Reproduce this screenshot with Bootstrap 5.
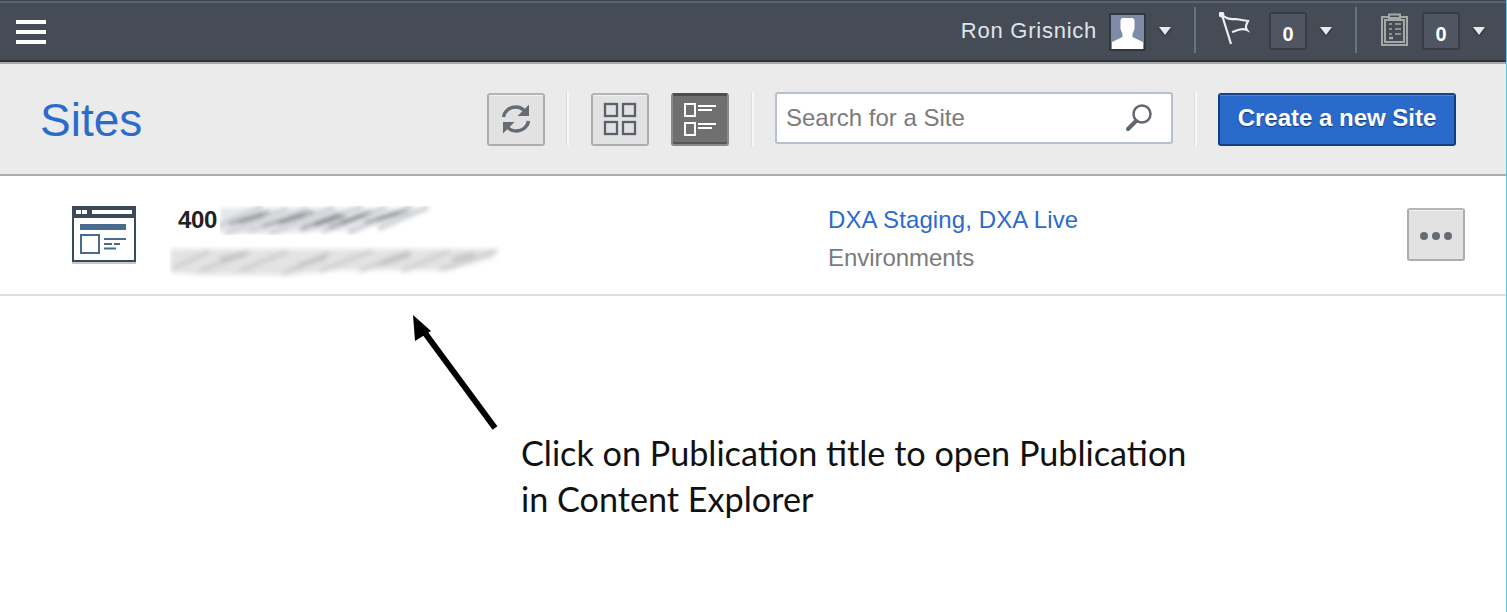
<!DOCTYPE html>
<html lang="en">
<head>
<meta charset="utf-8">
<title>Sites</title>
<link href="https://cdn.jsdelivr.net/npm/bootstrap@5.3.0/dist/css/bootstrap.min.css" rel="stylesheet">
<style>
html,body{height:612px;overflow:hidden;background:#fff}
body{font-family:"Liberation Sans",Arial,sans-serif;border-right:1px solid #5cc8ee}
.topbar{height:64px;background:linear-gradient(#3f4650 0 1px,#5a6571 1px 3px,#464c55 3px 60px,#2f343b 60px 62px,#a9a9a9 62px);padding:0 21px 0 16px}
.burger{width:30px;height:24px;background:linear-gradient(#fff 4px,transparent 4px 10px,#fff 10px 14px,transparent 14px 20px,#fff 20px);margin-top:0}
.uname{color:#dfe4ea;font-size:22px;letter-spacing:.75px;margin-right:12px;margin-top:-4px}
.avatar{width:37px;height:38px;background:#7f8ba6;border:2px solid #33383f;overflow:hidden;margin-right:13px}
.avatar svg{display:block}
.carat{width:0;height:0;border:6.5px solid transparent;border-top:8px solid #e8eaec;border-bottom:0;filter:drop-shadow(0 1px 1px #22262b);margin-top:-3px}
.vsep{width:2px;height:46px;background:#69727e;margin:-4px 23px 0}
.count{width:38px;height:38px;background:#4f5661;border:2px solid #383d45;border-radius:3px;color:#fff;font-size:20px;font-weight:700;margin-right:13px;margin-top:-2px;line-height:1;padding-top:10px}
.hicon{margin-top:-6px}
.gap-flag{margin-right:18px}
.gap-clip{margin-right:13px}
.toolbar{height:112px;background:#ebebeb;border-bottom:2px solid #adadad;padding:0 50px 0 40px}
.pagetitle{font-size:46px;color:#2a6bcc;line-height:1;margin:2px 0 0;font-weight:400}
.tbtn{width:58px;height:53px;background:#e2e2e2;border:2px solid #adadad;border-top-color:#b5b5b5;border-radius:3px;box-shadow:inset 0 1px 0 #f3f3f3;padding:0;flex-shrink:0}
.tbtn.is-on{background:#707070;border-color:#8a8a8a;border-top-color:#4d4d4d;box-shadow:inset 0 1px 0 #4d4d4d,inset 0 -2px 0 #565656;margin-left:22px}
.tsep{width:3px;height:54px;background:#f8f8f8;border-left:1px solid #dcdcdc;margin:0 21px;flex-shrink:0}
.tsep-first{margin-right:22px}
.tsep-wide{margin-left:22px}
.searchbox{width:398px;height:52px;background:#fff;border:2px solid #b6c0cf;border-radius:3px;padding:0 17px 0 9px;margin-top:-2px}
.searchbox input{border:0;outline:0;background:transparent;font-size:24px;font-family:inherit;width:100%;padding:0;color:#555}
.searchbox input::placeholder{color:#7b7b7b;opacity:1}
.createbtn{width:238px;height:53px;background:#2a6acb;border:2px solid #153f85;border-top-color:#16438c;border-radius:3px;color:#fff;font-size:24px;font-weight:700;line-height:1;padding:0 0 2px;text-shadow:0 1px 1px #123a7c;box-shadow:inset 0 1px 0 #4d86dc}
.createbtn:hover{background:#2a6acb;color:#fff}
.siterow{height:120px;border-bottom:2px solid #e0e0e0;background:#fff;padding:30px 41px 0 72px}
.siteicon{flex-shrink:0}
.titlecol{width:658px;margin-left:34px;flex-shrink:0}
.titleline{height:30px;padding-left:8px}
.siteid{font-size:24px;font-weight:700;color:#222;line-height:28px;letter-spacing:-.3px;margin-right:3px}
.smear{display:block;flex-shrink:0}
.smear-b{margin-top:10px}
.envs{flex-grow:1}
.envlink{font-size:24px;color:#2a6bcc;line-height:28px;letter-spacing:.1px;text-decoration:none;display:block}
.envlabel{font-size:24px;color:#7b7b7b;line-height:28px;margin-top:10px;letter-spacing:-.05px}
.morebtn{margin-top:2px}
.dot3{display:inline-block;width:8px;height:8px;background:#666b73;border-radius:50%;margin:0 2px}
.canvas{height:316px}
.arrow{position:absolute;left:400px;top:10px}
.note{font-family:"Lato",sans-serif;font-size:34.200px;line-height:46px;color:#111;margin:0;padding:134px 0 0 521px;white-space:nowrap}
</style>
</head>
<body>
<header class="topbar d-flex align-items-center">
  <div class="burger"></div>
  <div class="d-flex align-items-center ms-auto">
    <span class="uname">Ron Grisnich</span>
    <span class="avatar"><svg width="33" height="34" viewBox="0 0 33 34"><path fill="#fff" d="M11 3h11l1.500 2v9l-2 5v3l10.500 5v7H1v-7l10.500-5v-3l-2-5V5z"/></svg></span>
    <span class="carat"></span>
    <span class="vsep"></span>
    <svg width="32" height="34" viewBox="0 0 32 34" fill="none" stroke="#eceef0" stroke-width="2.200" class="hicon gap-flag"><circle cx="2.500" cy="2.500" r="1.800" fill="#eceef0"/><path d="M3 3c6 5 9 4 14 4l12 2c-2 4-3 6-1 9-6-3-10 1-15 2M3 3l9 29"/></svg>
    <span class="count text-center">0</span>
    <span class="carat"></span>
    <span class="vsep"></span>
    <svg width="29" height="33" viewBox="0 0 29 33" fill="none" stroke="#a5a9a5" stroke-width="2" class="hicon gap-clip"><path d="M9 4H2v28h25V4h-7M9 5V1.500h11V5zM5 7h19v22H5z"/><path stroke-width="1.700" d="M9 11h3M15 11h6M9 16h3M15 16h6M9 21h3M15 21h6"/><path stroke-width="2.500" d="M9 25h4"/></svg>
    <span class="count text-center">0</span>
    <span class="carat"></span>
  </div>
</header>

<section class="toolbar d-flex align-items-center">
  <h1 class="pagetitle">Sites</h1>
  <div class="d-flex align-items-center ms-auto">
    <button class="tbtn btn" type="button" aria-label="Refresh"><svg width="30" height="32" viewBox="0 0 30 32" fill="none" stroke="#666c76" stroke-width="3.500"><path d="M2.500 14C3.500 8 8.500 4 15 4c3.500 0 6.500 1.500 9 4.500"/><path d="M27.500 18C26.500 24 21.500 28 15 28c-3.500 0-6.500-1.500-9-4.500"/><path fill="#666c76" stroke="none" d="M28 1.500V13H16.500zM2 30.500V19h11.500z"/></svg></button>
    <span class="tsep tsep-first"></span>
    <button class="tbtn btn" type="button" aria-label="Grid view"><svg width="34" height="34" viewBox="0 0 34 34" fill="none" stroke="#5b616b" stroke-width="2.300"><rect x="2" y="2" width="12" height="12"/><rect x="20" y="2" width="12" height="12"/><rect x="2" y="20" width="12" height="12"/><rect x="20" y="20" width="12" height="12"/></svg></button>
    <button class="tbtn is-on btn" type="button" aria-label="List view"><svg width="34" height="34" viewBox="0 0 34 34" fill="none" stroke="#fff" stroke-width="2"><rect x="2" y="2" width="10" height="12"/><rect x="2" y="21" width="10" height="12"/><path d="M15 4h18M15 8h14M15 22h18M15 26h14"/></svg></button>
    <span class="tsep tsep-wide"></span>
    <label class="searchbox d-flex align-items-center mb-0">
      <input type="text" placeholder="Search for a Site">
      <svg width="30" height="30" viewBox="0 0 30 30" fill="none" stroke="#62666e" class="flex-shrink-0"><circle cx="18" cy="11" r="8.500" stroke-width="2.500"/><path d="M12 18l-8 8" stroke-width="4" stroke-linecap="round"/></svg>
    </label>
    <span class="tsep"></span>
    <button class="createbtn btn" type="button">Create a new Site</button>
  </div>
</section>

<section class="siterow d-flex align-items-start">
  <svg class="siteicon" width="64" height="58" viewBox="0 0 64 58">
    <rect x="0" y="56" width="64" height="2" fill="#c6c8cb"/>
    <rect x="1" y="1" width="62" height="54" fill="#fff" stroke="#3a4a5a" stroke-width="2"/>
    <rect x="0" y="0" width="64" height="12" fill="#3a4a5a"/>
    <rect x="4" y="4" width="5" height="4" fill="#fff"/><rect x="10" y="4" width="5" height="4" fill="#fff"/><rect x="20" y="4" width="40" height="4" fill="#fff"/>
    <rect x="8" y="18" width="46" height="6" fill="#4a6b90"/>
    <rect x="9" y="29" width="18" height="18" fill="none" stroke="#4a6b90" stroke-width="2"/>
    <path d="M32 33h22M32 38h8M42 38h6M32 42.500h12" stroke="#4a6b90" stroke-width="2"/>
  </svg>
  <div class="titlecol">
    <div class="titleline d-flex align-items-start">
      <span class="siteid">400</span>
      <svg class="smear" width="214" height="29" viewBox="0 0 214 29">
        <defs><filter id="bl1" x="-10%" y="-30%" width="120%" height="160%"><feGaussianBlur stdDeviation="2.200"/></filter></defs>
        <g filter="url(#bl1)" fill="none" stroke-linecap="round">
          <path d="M0 2H212L190 12 130 24 50 28H0z" fill="#e6e7e9"/>
          <path d="M-2 20L40 1M8 27L66 3M30 25L86 3M52 27L112 2M82 24L140 1M104 25L164 2M130 26L190 1M160 22L206 2" stroke="#cfd1d5" stroke-width="5"/>
          <path d="M10 18L48 6M44 20L92 6M82 22L118 8M110 21L150 6M146 16L186 5" stroke="#a3a7ad" stroke-width="3.500"/>
          <path d="M20 16L42 9M60 17L84 9M96 19L124 10M122 17L144 9M158 13L178 7" stroke="#6a717b" stroke-width="2.500"/>
        </g>
      </svg>
    </div>
    <svg class="smear smear-b" width="330" height="32" viewBox="0 0 330 32">
      <defs><filter id="bl2" x="-10%" y="-30%" width="120%" height="160%"><feGaussianBlur stdDeviation="2.500"/></filter></defs>
      <g filter="url(#bl2)" fill="none">
        <path d="M0 3H330L322 12 280 24H170L120 29H30L0 26z" fill="#e3e3e4"/>
        <path d="M4 22L40 5M30 25L80 6M70 25L118 5M112 28L160 7M150 25L202 5M190 25L240 5M232 25L280 5M270 24L326 5" stroke="#cbcccd" stroke-width="4"/>
        <path d="M50 14L76 7M128 20L156 11M210 18L240 9M282 14L304 8" stroke="#b2b4b6" stroke-width="3"/>
      </g>
    </svg>
  </div>
  <div class="envs">
    <a class="envlink" href="#">DXA Staging, DXA Live</a>
    <div class="envlabel">Environments</div>
  </div>
  <button class="tbtn morebtn btn" type="button" aria-label="More"><span class="dot3"></span><span class="dot3"></span><span class="dot3"></span></button>
</section>

<section class="canvas position-relative">
  <svg class="arrow" width="110" height="130" viewBox="0 0 110 130"><path d="M95 122L22 23" stroke="#000" stroke-width="6" fill="none"/><path d="M13 9L31 25 15 35z" fill="#000"/></svg>
  <p class="note">Click on Publication title to open Publication<br>in Content Explorer</p>
</section>
<script src="https://cdn.jsdelivr.net/npm/bootstrap@5.3.0/dist/js/bootstrap.bundle.min.js"></script>
</body>
</html>
